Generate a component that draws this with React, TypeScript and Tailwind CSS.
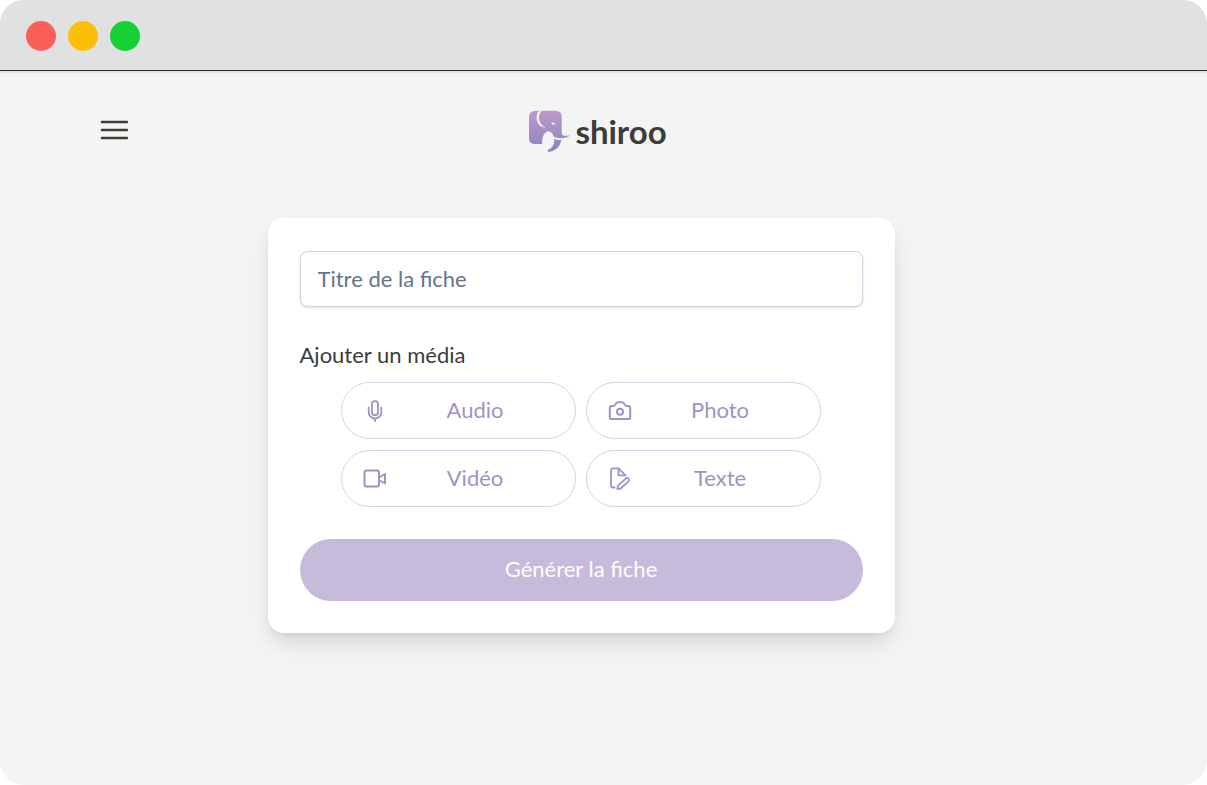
import type { ReactNode } from "react";

function Icon({ children }: { children: ReactNode }) {
  return (
    <svg
      viewBox="0 0 24 24"
      className="size-6 shrink-0"
      fill="none"
      stroke="currentColor"
      strokeWidth="2"
      strokeLinecap="round"
      strokeLinejoin="round"
      aria-hidden="true"
    >
      {children}
    </svg>
  );
}

const media = [
  {
    label: "Audio",
    icon: (
      <Icon>
        <rect x="9" y="2.2" width="6" height="14" rx="2.6" strokeWidth="1.8" />
        <path d="M5.700 8.500v5a6.300 6 0 0 0 12.600 0v-5M12 19.500v2.500" strokeWidth="1.8" />
      </Icon>
    ),
  },
  {
    label: "Photo",
    icon: (
      <Icon>
        <path d="M3.7 7h1.500c1.300 0 1.700-.6 2.200-1.700.6-1.500 1.200-2.100 2.600-2.100h4c1.400 0 2 .6 2.600 2.100.5 1.100.9 1.700 2.200 1.700h1.500c1.200 0 1.900.8 1.900 2v9.200c0 1.200-.7 1.900-1.900 1.900H3.700c-1.200 0-1.900-.7-1.900-1.900V9c0-1.200.7-2 1.900-2Z" />
        <circle cx="12" cy="12.800" r="3" />
      </Icon>
    ),
  },
  {
    label: "Vidéo",
    icon: (
      <Icon>
        <rect x="1.500" y="3.500" width="14.500" height="16" rx="2" />
        <path d="m16 10.500 6-3.500v9.500l-6-3.500Z" />
      </Icon>
    ),
  },
  {
    label: "Texte",
    icon: (
      <Icon>
        <path d="M6.500 20.500H5a2 2 0 0 1-2-2V3.300a2 2 0 0 1 2-2h5.500l7 7" strokeWidth="1.8" />
        <path d="M10.500 1.300v7h7" strokeWidth="1.8" />
        <path d="m10 18.700 7.700-7a1.900 1.900 0 0 1 2.700 2.700l-7.700 7.100-3.300.700Z" strokeWidth="1.800" />
      </Icon>
    ),
  },
];

function Logo() {
  return (
    <a href="#" aria-label="shiroo" className="flex items-center gap-1 text-[#3c3c3b]">
      <svg viewBox="6 5 43 44" className="h-11 w-[43px]" aria-hidden="true">
        <defs>
          <linearGradient id="elephant" x1="0" y1="6" x2="0" y2="48" gradientUnits="userSpaceOnUse">
            <stop stopColor="#bd9bc9" />
            <stop offset="1" stopColor="#8c84c1" />
          </linearGradient>
        </defs>
        <path
          fill="url(#elephant)"
          d="M14 6.700H33.500Q39.700 6.700 39.700 13V29.500Q39.700 31.500 42 31.700Q45 31.900 48.500 31.200Q44.500 34.200 39 34.200Q34 34 31.500 32.500Q30.500 27.500 26 27.200C21 28.500 20.200 34 20.200 40H13Q7 40 7 34V13Q7 6.700 14 6.700Z"
        />
        <path
          fill="url(#elephant)"
          d="M32 35Q35 36.300 39.200 35.800C38.500 42.500 33.500 47.500 26.300 47.900Q25.400 47.600 26 45.800C30.500 44 32.800 40 32 35Z"
        />
        <path
          fill="#f4f4f2"
          d="M18 6.500C14.300 8.500 14.100 13.500 15.100 17C16.200 20.800 19.200 23.400 23.500 23.800C19.200 21.500 17.200 18 17 14.500C16.900 11 17.500 8.500 20.500 6.500Z"
        />
        <path fill="#f4f4f2" d="M29.200 18.900Q31 17.900 33.200 19.800Q31.500 22.200 29.200 18.900Z" />
      </svg>
      <span className="font-['Lato',sans-serif] text-[33px] leading-10 font-bold">shiroo</span>
    </a>
  );
}

export default function App() {
  return (
    <div className="flex min-h-screen flex-col overflow-hidden rounded-3xl bg-[#f4f4f2] font-['Lato',sans-serif] text-[22px] leading-8 text-[#3c3c3b]">
      <div className="flex h-[71px] items-center gap-3 border-b border-[#2b2529] bg-[#e1e1e1] pt-0.5 pl-[26px]">
        <span className="size-[30px] rounded-full bg-[#fb6058]" />
        <span className="size-[30px] rounded-full bg-[#fcbe09]" />
        <span className="size-[30px] rounded-full bg-[#16d135]" />
      </div>

      <header className="grid grid-cols-[1fr_auto_1fr] items-center border-t-2 border-[#e4e2e3] pt-9 pr-[112px] pl-[100px]">
        <button type="button" aria-label="Menu" className="-mt-0.5 w-fit">
          <svg viewBox="0 0 28 20" className="h-5 w-7" aria-hidden="true">
            <path d="M2 2h25M2 10h25M2 18h25" stroke="currentColor" strokeWidth="2.4" strokeLinecap="round" />
          </svg>
        </button>
        <Logo />
      </header>

      <main className="flex justify-center px-6 pt-[65px] pr-[69px] pb-16">
        <form className="w-full max-w-[627px] rounded-2xl bg-white px-8 pt-[33px] pb-8 shadow-[0_12px_24px_-4px_rgba(0,0,0,0.14),0_4px_8px_-4px_rgba(0,0,0,0.1)]">
          <input
            type="text"
            aria-label="Titre de la fiche"
            placeholder="Titre de la fiche"
            className="h-14 w-full rounded-lg border border-[#cbd5e1] bg-white px-[17px] pb-0.5 shadow-sm outline-none placeholder:text-[#64748b]"
          />
          <p className="mt-8">Ajouter un média</p>
          <div className="mx-auto mt-[11px] grid max-w-[480px] grid-cols-2 gap-x-2.5 gap-y-[11px]">
            {media.map(({ label, icon }) => (
              <button
                key={label}
                type="button"
                className="flex h-[57px] items-center rounded-full border border-[#d9d2e6] pr-5 pl-[21px] text-[#a192c5]"
              >
                {icon}
                <span className="flex-1 pb-0.5 pl-2">{label}</span>
              </button>
            ))}
          </div>
          <button
            type="submit"
            className="mt-8 h-[62px] w-full rounded-full bg-[#c6bbda] pb-0.5 text-white"
          >
            Générer la fiche
          </button>
        </form>
      </main>
    </div>
  );
}
